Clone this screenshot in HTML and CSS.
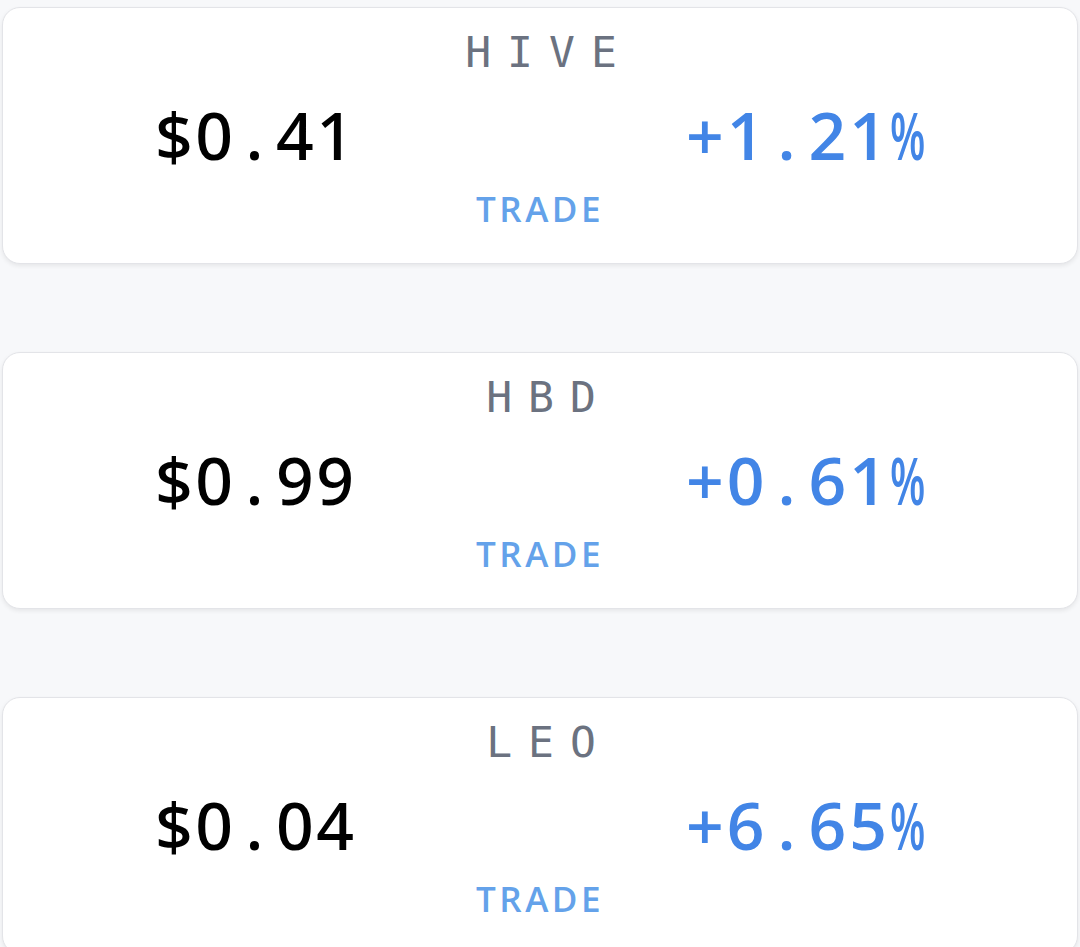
FILE: index.html
```html
<!DOCTYPE html>
<html lang="en">
<head>
<meta charset="utf-8">
<title>Prices</title>
<link rel="stylesheet" href="styles.css">
</head>
<body>
  <main class="list">
    <section class="card">
      <div class="symbol">HIVE</div>
      <div class="row">
        <span class="price">$0<span class="dot">.</span>41</span>
        <span class="change">+1<span class="dot">.</span>21<span class="pct">%</span></span>
      </div>
      <a class="trade" href="#">TRADE</a>
    </section>
    <section class="card">
      <div class="symbol">HBD</div>
      <div class="row">
        <span class="price">$0<span class="dot">.</span>99</span>
        <span class="change">+0<span class="dot">.</span>61<span class="pct">%</span></span>
      </div>
      <a class="trade" href="#">TRADE</a>
    </section>
    <section class="card">
      <div class="symbol">LEO</div>
      <div class="row">
        <span class="price">$0<span class="dot">.</span>04</span>
        <span class="change">+6<span class="dot">.</span>65<span class="pct">%</span></span>
      </div>
      <a class="trade" href="#">TRADE</a>
    </section>
  </main>
</body>
</html>
```
FILE: styles.css
```css
html, body {
  margin: 0;
  padding: 0;
  background: #f7f8fa;
}
body {
  font-family: "DejaVu Sans Mono", "Liberation Mono", monospace;
}
.list {
  display: flex;
  flex-direction: column;
  gap: 88px;
  padding: 7px 2px 0;
}
.card {
  background: #ffffff;
  border: 1px solid #e3e4e8;
  border-radius: 18px;
  box-shadow: 0 2px 4px rgba(0, 0, 0, 0.07);
  padding: 19px 0 34px;
  display: flex;
  flex-direction: column;
  align-items: center;
}
.symbol {
  font-size: 43px;
  line-height: 50px;
  color: #6b7280;
  letter-spacing: 16px;
  padding-left: 18px;
}
.row {
  align-self: stretch;
  display: flex;
  justify-content: space-between;
  padding: 0 151px 0 152px;
  margin-top: 17px;
  font-family: "Open Sans", "Noto Sans", sans-serif;
  font-size: 66px;
  line-height: 80px;
  letter-spacing: 2.5px;
}
.dot {
  padding: 0 10px;
}
.price {
  color: #000000;
  font-family: "Noto Sans", "Open Sans", sans-serif;
  font-weight: 500;
}
.change {
  color: #4285e6;
  font-weight: 600;
  letter-spacing: 3px;
}
.pct {
  display: inline-block;
  width: 36px;
  transform: scaleX(0.62);
  transform-origin: left center;
  letter-spacing: 0;
}
.trade {
  margin-top: 15px;
  font-family: "Open Sans", "Noto Sans", sans-serif;
  font-weight: 600;
  font-size: 35px;
  line-height: 40px;
  letter-spacing: 3.5px;
  color: #64a2ea;
  text-decoration: none;
}
```
